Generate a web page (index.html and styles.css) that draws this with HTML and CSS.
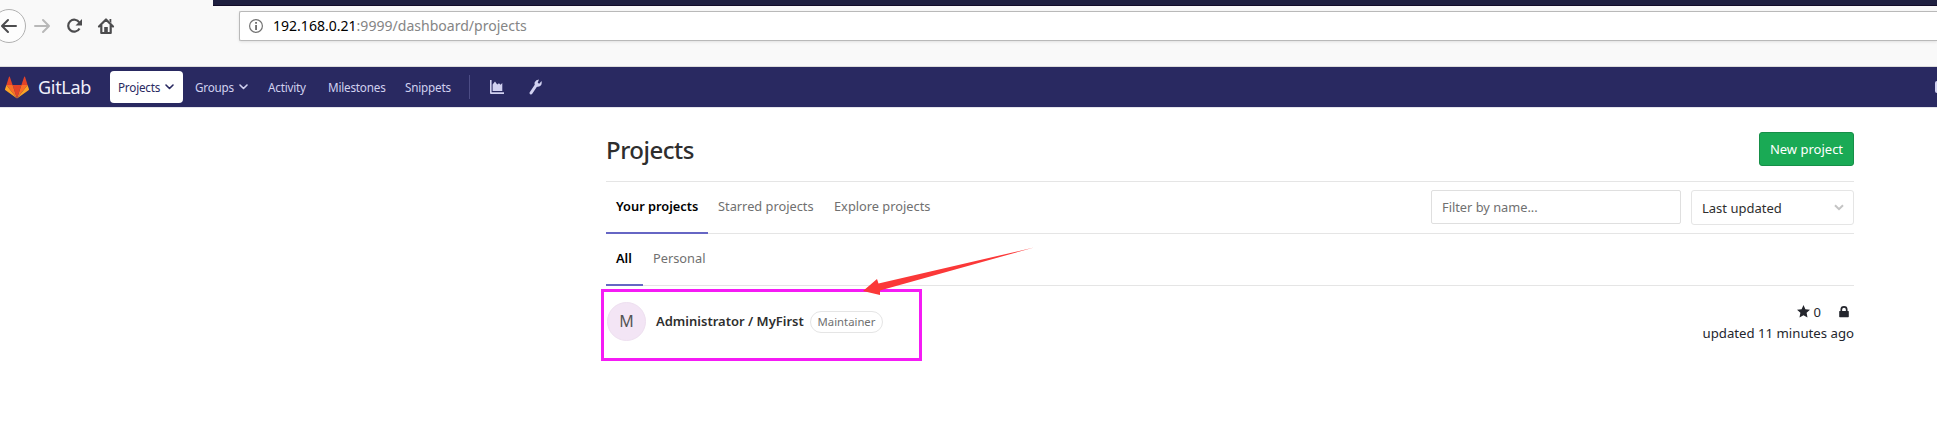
FILE: index.html
```html
<!DOCTYPE html>
<html lang="en">
<head>
<meta charset="utf-8">
<title>Projects · Dashboard · GitLab</title>
<link rel="stylesheet" href="styles.css">
</head>
<body>
<div class="browser">
  <div class="tabstrip"></div>
  <div class="toolbar">
    <svg class="controls" width="120" height="36" viewBox="0 0 120 36" fill="none">
      <circle cx="9" cy="18" r="16.500" fill="#fdfdfd" stroke="#b1b1b1"/>
      <path d="M16 18H2.500M8 12l-6 6 6 6" stroke="#4c4c4e" stroke-width="2" stroke-linecap="round" stroke-linejoin="round"/>
      <path d="M35 18h13.500M43 12l6 6-6 6" stroke="#b8b8b8" stroke-width="2" stroke-linecap="round" stroke-linejoin="round"/>
      <path d="M79.300 14.500a6 6 0 1 0 .2 6" stroke="#4c4c4e" stroke-width="2.200"/>
      <path d="M82 11v6.500h-6.500z" fill="#4c4c4e"/>
      <path d="M99 18.500l7-7 7 7M101.300 17v8h9.400v-8" stroke="#4c4c4e" stroke-width="2.200" stroke-linecap="round" stroke-linejoin="round"/>
      <path d="M104.200 25v-6h3.600v6z" fill="#4c4c4e"/><path d="M109.500 11h1.800v4l-1.800-1.800z" fill="#4c4c4e"/>
    </svg>
    <div class="urlbar">
      <svg width="16" height="16" viewBox="0 0 16 16"><circle cx="8" cy="8" r="6.400" fill="none" stroke="#737373" stroke-width="1.200"/><path d="M7.200 4h1.700v1.700H7.200zM7.200 7h1.700v5H7.200z" fill="#606060"/></svg>
      <span class="url"><span class="host">192.168.0.21</span><span class="path">:9999/dashboard/projects</span></span>
    </div>
  </div>
</div>
<header class="navbar">
  <svg class="logo" width="24" height="23" viewBox="0 0 24 23">
    <path fill="#e24329" d="M12 22.500L7.600 9h8.800z"/>
    <path fill="#fc6d26" d="M12 22.500L7.600 9H1.400zM12 22.500L16.400 9h6.200z"/>
    <path fill="#fca326" d="M1.400 9L0 13.200q-.1.700.5 1.100L12 22.500zM22.600 9l1.400 4.200q.1.700-.5 1.100L12 22.500z"/>
    <path fill="#e24329" d="M1.400 9L4 .8q.4-.7.800 0L7.600 9zM22.600 9L20 .8q-.4-.7-.8 0L16.400 9z"/>
  </svg>
  <span class="brand">GitLab</span>
  <nav class="menu">
    <a class="item active"><span>Projects</span><svg width="9" height="6" viewBox="0 0 9 6"><path d="M1 1l3.500 3.500L8 1"/></svg></a>
    <a class="item groups"><span>Groups</span><svg width="9" height="6" viewBox="0 0 9 6"><path d="M1 1l3.500 3.500L8 1"/></svg></a>
    <a class="item activity">Activity</a>
    <a class="item milestones">Milestones</a>
    <a class="item snippets">Snippets</a>
  </nav>
  <span class="divider"></span>
  <svg class="chart" width="14" height="14" viewBox="0 0 14 14"><path fill="#d1d1f0" d="M0 0h1.600v12.200H14V14H1Q0 14 0 13zM2.600 11V4.500L5 1.500l2.200 3L9 3.300l1.500 1.500L12.300 3v8z"/></svg>
  <svg class="wrench" width="13" height="16" viewBox="0 0 13 16"><path d="M2 14l5-7.500" stroke="#d1d1f0" stroke-width="3" stroke-linecap="round"/><path fill="#d1d1f0" d="M10 .5L8.700 3.800l1.500 1L12.500 2q.8 3-1 4.800-2 1.600-4.500.7-2-1.700-1.300-4.200Q7 .5 10 .5z"/></svg>
  <span class="edge"></span>
</header>
<main class="content">
  <div class="head"><h1>Projects</h1><a class="new"><span>New project</span></a></div>
  <div class="row">
    <div class="tabs">
      <a class="tab on your">Your projects</a>
      <a class="tab starred">Starred projects</a>
      <a class="tab explore">Explore projects</a>
    </div>
    <div class="filters">
      <div class="filter"><span>Filter by name...</span></div>
      <div class="sort"><span>Last updated</span><svg width="10" height="7" viewBox="0 0 10 7"><path d="M1 1.200l4 4 4-4" fill="none" stroke="#c4c4c4" stroke-width="2"/></svg></div>
    </div>
  </div>
  <div class="row">
    <div class="tabs">
      <a class="tab on all">All</a>
      <a class="tab personal">Personal</a>
    </div>
  </div>
  <div class="project">
    <div class="avatar">M</div>
    <span class="name">Administrator / MyFirst</span>
    <span class="badge">Maintainer</span>
    <div class="meta">
      <div class="stats">
        <svg width="13" height="13" viewBox="0 0 13 13"><path fill="#24262d" d="M6.500 0l1.900 4.200 4.600.5-3.400 3.100.9 4.700-4-2.300-4 2.300.9-4.700L0 4.700l4.600-.5z"/></svg>
        <span class="count">0</span>
        <svg class="lock" width="10" height="12" viewBox="0 0 10 12"><path fill="#24262d" d="M.8 5h8.400q.6 0 .6.600v5q0 .6-.6.600H.8q-.6 0-.6-.6v-5Q.2 5 .8 5z"/><path fill="none" stroke="#24262d" stroke-width="1.700" d="M2.300 5.500V3.400a2.700 2.500 0 0 1 5.400 0v2.100"/></svg>
      </div>
      <div class="updated">updated 11 minutes ago</div>
    </div>
  </div>
</main>
<div class="highlight"></div>
<svg class="arrow" width="174" height="50" viewBox="860 246 174 50"><path fill="#fb3838" d="M863 291L877 279L878.500 283.500L1034 247.500L880 290.500L880 295z"/></svg>
</body>
</html>
```
FILE: styles.css
```css
* { box-sizing: border-box; }
body { margin: 0; width: 1937px; height: 438px; overflow: hidden; background: #fff; color: #2e2e2e; font-family: "Noto Sans", "Open Sans", sans-serif; font-size: 13px; position: relative; }
svg { display: block; flex: none; }
span, a { white-space: nowrap; }
.browser { height: 67px; background: #f9f9f9; border-bottom: 1px solid #dcdcdc; }
.tabstrip { height: 6px; margin-left: 213px; background: #1f2040; border-bottom: 1px solid #120c28; }
.toolbar { display: flex; height: 40px; align-items: center; }
.controls { margin-right: 119px; }
.urlbar { flex: 1; height: 30px; background: #fff; border: 1px solid #b9b9b9; border-right: 0; border-radius: 2px 0 0 2px; box-shadow: 0 1px 3px #0000001a; display: flex; align-items: center; padding-left: 8px; gap: 9px; }
.url { font-size: 14.050px; line-height: 20px; color: #858585; padding-bottom: 1px; }
.host { color: #000; }
.navbar { height: 41px; background: #292961; border-bottom: 1px solid #e4e4ec; display: flex; align-items: center; padding-left: 5px; color: #d1d1f0; position: relative; }
.brand { margin-left: 9px; width: 61px; font-size: 18px; letter-spacing: -0.3px; color: #f0f0fb; }
.menu { display: flex; align-items: center; margin-left: 11px; font-size: 11.700px; letter-spacing: -0.200px; }
.item { display: block; }
.active, .groups { display: flex; align-items: center; gap: 5px; }
.active { background: #fff; color: #292961; border-radius: 4px; height: 32px; width: 73px; padding-left: 8px; margin-right: 12px; }
.groups { width: 73px; }
.activity { width: 60px; }
.milestones { width: 77px; }
.snippets { width: 64px; }
.item path { fill: none; stroke: currentColor; stroke-width: 1.600; stroke-linecap: round; stroke-linejoin: round; }
.divider { width: 1px; height: 24px; background: #4c4c85; }
.chart { margin-left: 20px; }
.wrench { margin-left: 25px; }
.edge { position: absolute; right: 0; top: 14px; width: 2px; height: 12px; background: #d1d1f0; border-radius: 2px 0 0 2px; }
.content { margin-left: 606px; width: 1248px; }
.head { height: 74px; border-bottom: 1px solid #e5e5e5; display: flex; justify-content: space-between; padding-top: 24px; }
h1 { margin: 0; font-size: 24px; line-height: 36px; font-weight: 500; letter-spacing: -0.500px; }
.new { width: 95px; height: 34px; background: #1aaa55; border: 1px solid #168f48; border-radius: 3px; color: #fff; display: flex; align-items: center; justify-content: center; }
.row { height: 52px; border-bottom: 1px solid #e5e5e5; display: flex; justify-content: space-between; }
.tabs { display: flex; color: #707070; }
.tab { height: 52px; padding-left: 10px; line-height: 48px; font-size: 12.800px; }
.on { color: #000; font-weight: 600; border-bottom: 2px solid #6666c4; }
.your { width: 102px; }
.starred { width: 116px; }
.all { width: 37px; }
.filters { display: flex; gap: 10px; padding-top: 8px; }
.filter { width: 250px; height: 34px; border: 1px solid #dfdfdf; border-radius: 2px; padding-left: 10px; color: #707070; line-height: 32px; font-size: 12.800px; }
.sort { width: 163px; height: 35px; border: 1px solid #e5e5e5; border-radius: 3px; padding: 0 9px 0 10px; display: flex; align-items: center; justify-content: space-between; }
.project { display: flex; height: 76px; align-items: center; padding-left: 1px; padding-bottom: 6px; }
.avatar { width: 39px; height: 39px; border-radius: 50%; background: #f3e5f5; border: 1px solid #eee0f0; color: #555; font-size: 16px; line-height: 37px; text-align: center; }
.name { margin-left: 10px; width: 147px; font-weight: 600; }
.badge { margin-left: 7px; width: 73px; height: 22px; margin-top: 2px; border: 1px solid #e5e5e5; border-radius: 11px; color: #707070; font-size: 11.300px; line-height: 20px; text-align: center; }
.meta { margin-left: auto; padding-top: 4px; color: #24262d; }
.stats { display: flex; justify-content: flex-end; align-items: center; height: 21px; padding-right: 5px; }
.count { margin-left: 4px; }
.lock { margin-left: 18px; }
.updated { line-height: 23px; font-size: 13.200px; }
.highlight { position: absolute; left: 601px; top: 289px; width: 321px; height: 72px; border: 3px solid #f51bf5; }
.arrow { position: absolute; left: 860px; top: 246px; }
```
